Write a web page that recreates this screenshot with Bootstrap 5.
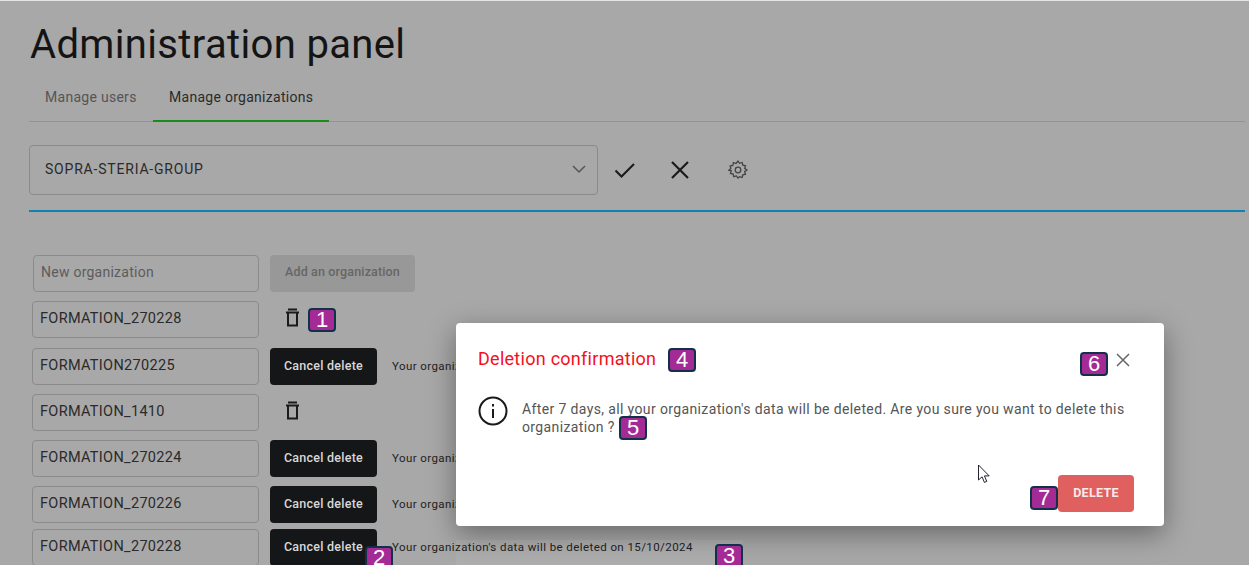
<!DOCTYPE html>
<html lang="en">
<head>
<meta charset="utf-8">
<title>Administration panel</title>
<link href="https://cdn.jsdelivr.net/npm/bootstrap@5.3.0/dist/css/bootstrap.min.css" rel="stylesheet">
<style>
html,body{height:565px;overflow:hidden}
body{background:#a8a8a8;font-family:Roboto,"Liberation Sans",sans-serif;color:#222;position:relative;border-top:1px solid #e4e4e4}
.page-wrap{padding:0 4px 0 29px}
.page-title{font-size:40px;font-weight:400;line-height:48px;margin:20px 0 0 1px;letter-spacing:.35px;color:#141414}
.tab-bar{margin-top:11px;height:42px;border-bottom:1px solid #939393;gap:0}
.tab-item{font-size:14px;letter-spacing:.28px;color:#555;padding:0 16px;height:42px;line-height:34px;border-bottom:2px solid transparent;width:124px;margin-bottom:-1px;white-space:nowrap}
.tab-item.is-on{color:#2b2b2b;border-bottom-color:#1c8a1c;width:176px;padding-left:16px}
.org-select-row{margin-top:23px;height:50px}
.org-select{width:569px;height:50px;background-color:transparent;border:1px solid #8a8a8a;border-radius:4px;padding:0 36px 2px 15px;font-size:14px;letter-spacing:.8px;color:#2a2a2a;--bs-form-select-bg-img:none;background-image:none}
.select-box{position:relative;width:569px}
.chev{position:absolute;right:12px;top:20px;pointer-events:none}
.tool-icons{margin-left:16px;gap:34px}
.gear-mark{margin-left:4px}
.blue-rule{border-top:2px solid #0f82b4;margin-top:15px;opacity:1}
.org-list{margin-top:43px;margin-left:3px}
.org-row{display:flex;align-items:flex-start;gap:11px}
.org-name{width:227px;height:37px;background:transparent;border:1px solid #8b8b8b;border-radius:4px;padding:0 7px 3px;font-size:14.5px;letter-spacing:.32px;color:#2a2a2a}
.org-name::placeholder{color:#5c5c5c}
.new-name{margin-left:1px;width:226px;font-size:14px;letter-spacing:.25px;padding-bottom:4px}
.add-btn{width:145px;height:37px;background:#989898;border:0;border-radius:4px;font-size:12.5px;font-weight:500;color:#666;padding:0 0 2px;letter-spacing:.15px}
.cancel-btn{width:107px;height:37px;background:#141617;color:#d8d8d8;border:0;border-radius:4px;font-size:12.5px;font-weight:500;padding:0 0 1px;letter-spacing:.25px}
.trash-slot{width:107px;padding:7px 0 0 15px;line-height:0}
.notice{font-size:11.5px;color:#222;letter-spacing:.42px;margin-left:4px;padding-top:10px;white-space:nowrap}
.gap-a{margin-top:9px}.gap-b{margin-top:10px}.gap-c{margin-top:6px}
.band{position:absolute;left:456px;top:539px;width:287px;height:26px;background:#adadad;z-index:-1}
.dlg-wrap{position:absolute;left:456px;top:322px;width:708px;z-index:5}
.dlg{height:203px;border:0;border-radius:4px;box-shadow:0 8px 28px rgba(0,0,0,.38);padding:0;background:#fff}
.dlg-head{height:73px;padding:22px 34px 0 22px}
.dlg-title{font-size:18px;font-weight:400;letter-spacing:.27px;color:#f5101c;margin:0;line-height:28px}
.dlg-close{background:none;border:0;padding:0;line-height:0;margin-top:8px}
.dlg-body{padding:0 30px 0 22px;gap:14px}
.dlg-text{font-size:14px;line-height:18px;letter-spacing:.37px;color:#555;margin:4px 0 0}
.dlg-foot{padding:0 30px 14px}
.del-btn{width:76px;height:37px;background:#e06060;border:0;border-radius:4px;color:#fbe9e9;font-size:12.5px;font-weight:700;padding:0;letter-spacing:.3px}
.pin{position:absolute;width:28px;height:24px;background:#a42b96;border:2px solid #12304a;border-radius:4px;color:#fff;font:22px/20px "Liberation Sans",sans-serif;text-align:center;z-index:8}
.p1{left:308px;top:307px}.p2{left:365px;top:545px}.p3{left:715px;top:543px}.p4{left:668px;top:347px}.p5{left:619px;top:415px}.p6{left:1080px;top:351px}.p7{left:1030px;top:485px}
.cursor-mark{position:absolute;left:977px;top:463px;z-index:8;line-height:0}
</style>
</head>
<body>
<div class="page-wrap">
  <h1 class="page-title">Administration panel</h1>
  <div class="d-flex tab-bar">
    <div class="tab-item">Manage users</div>
    <div class="tab-item is-on">Manage organizations</div>
  </div>
  <div class="d-flex align-items-center org-select-row">
    <div class="select-box">
      <select class="form-select org-select"><option>SOPRA-STERIA-GROUP</option></select>
      <svg class="chev" width="14" height="9" viewBox="0 0 14 9" fill="none" stroke="#555" stroke-width="1.5"><path d="M1 1l6 6 6-6"/></svg>
    </div>
    <div class="d-flex align-items-center tool-icons">
      <svg width="22" height="16" viewBox="0 0 22 16" fill="none" stroke="#1a1a1a" stroke-width="2"><path d="M1.5 8.5l6 6L20 2"/></svg>
      <svg width="20" height="18" viewBox="0 0 20 18" fill="none" stroke="#1a1a1a" stroke-width="2.2"><path d="M2 1l16 16M18 1L2 17"/></svg>
      <svg class="gear-mark" width="20" height="20" viewBox="0 0 20 20" fill="none" stroke="#444" stroke-width="1.3"><path d="M10 1.5l1.6 2.2 2.6-.8.6 2.7 2.7.6-.8 2.6 2.2 1.6-2.2 1.6.8 2.6-2.7.6-.6 2.7-2.6-.8L10 18.5l-1.6-2.2-2.6.8-.6-2.7-2.7-.6.8-2.6L.7 10.6l2.2-1.6-.8-2.6 2.7-.6.6-2.7 2.6.8z" transform="translate(0 -.4)"/><circle cx="10" cy="10" r="2.8"/></svg>
    </div>
  </div>
  <hr class="blue-rule mb-0">
  <div class="org-list">
    <div class="org-row">
      <input class="org-name new-name" placeholder="New organization">
      <button class="add-btn" type="button">Add an organization</button>
    </div>
    <div class="org-row gap-a">
      <input class="org-name" value="FORMATION_270228">
      <div class="trash-slot"><svg width="16" height="19" viewBox="0 0 16 19" fill="none" stroke="#1a1a1a" stroke-width="2"><path d="M3 1.5h9M1 4.5h13M3 5v12.5h9V5"/></svg></div>
    </div>
    <div class="org-row gap-b">
      <input class="org-name" value="FORMATION270225">
      <button class="cancel-btn" type="button">Cancel delete</button>
      <span class="notice">Your organization's data will be deleted on 15/10/2024</span>
    </div>
    <div class="org-row gap-a">
      <input class="org-name" value="FORMATION_1410">
      <div class="trash-slot"><svg width="16" height="19" viewBox="0 0 16 19" fill="none" stroke="#1a1a1a" stroke-width="2"><path d="M3 1.5h9M1 4.5h13M3 5v12.5h9V5"/></svg></div>
    </div>
    <div class="org-row gap-a">
      <input class="org-name" value="FORMATION_270224">
      <button class="cancel-btn" type="button">Cancel delete</button>
      <span class="notice">Your organization's data will be deleted on 15/10/2024</span>
    </div>
    <div class="org-row gap-a">
      <input class="org-name" value="FORMATION_270226">
      <button class="cancel-btn" type="button">Cancel delete</button>
      <span class="notice">Your organization's data will be deleted on 15/10/2024</span>
    </div>
    <div class="org-row gap-c">
      <input class="org-name" value="FORMATION_270228">
      <button class="cancel-btn" type="button">Cancel delete</button>
      <span class="notice">Your organization's data will be deleted on 15/10/2024</span>
    </div>
  </div>
</div>
<div class="band"></div>
<div class="dlg-wrap">
  <div class="modal-content dlg">
    <div class="d-flex justify-content-between align-items-start dlg-head">
      <h5 class="dlg-title">Deletion confirmation</h5>
      <button class="dlg-close" type="button" aria-label="Close"><svg width="14" height="14" viewBox="0 0 14 14" fill="none" stroke="#666" stroke-width="1.5"><path d="M1 1l12 12M13 1L1 13"/></svg></button>
    </div>
    <div class="d-flex dlg-body">
      <svg class="flex-shrink-0" width="30" height="30" viewBox="0 0 30 30" fill="none" stroke="#1a1a1a" stroke-width="2"><circle cx="15" cy="15" r="13.5"/><path d="M15 13v9M15 8v2.4"/></svg>
      <p class="dlg-text">After 7 days, all your organization's data will be deleted. Are you sure you want to delete this organization ?</p>
    </div>
    <div class="d-flex justify-content-end mt-auto dlg-foot">
      <button class="del-btn" type="button">DELETE</button>
    </div>
  </div>
</div>
<div class="pin p1">1</div><div class="pin p2">2</div><div class="pin p3">3</div><div class="pin p4">4</div><div class="pin p5">5</div><div class="pin p6">6</div><div class="pin p7">7</div>
<svg class="cursor-mark" width="14" height="21" viewBox="0 0 14 21" fill="#fff" stroke="#223" stroke-width="1"><path d="M1.5 1v15l3.6-3.2 2.3 5.6 2.4-1-2.4-5.5h4.8z"/></svg>
<script src="https://cdn.jsdelivr.net/npm/bootstrap@5.3.0/dist/js/bootstrap.bundle.min.js"></script>
</body>
</html>
